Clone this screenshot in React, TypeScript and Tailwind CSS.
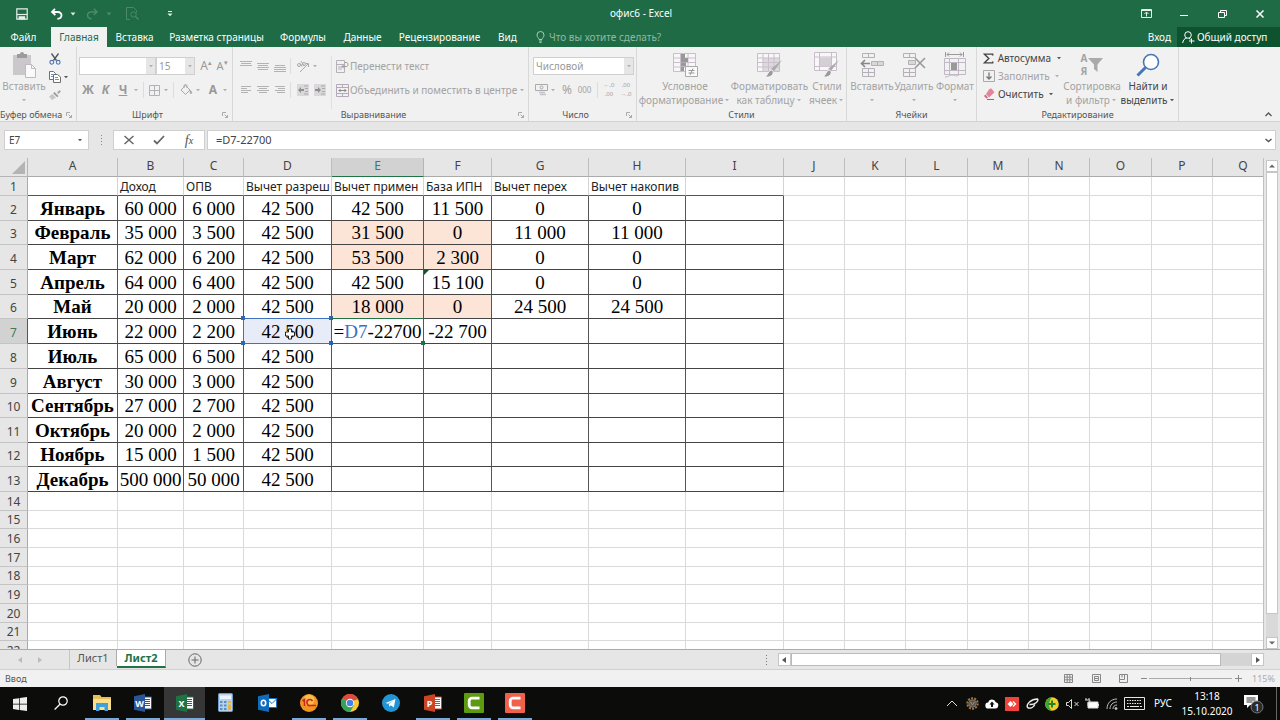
import { useState } from 'react';
import type { ReactNode } from 'react';
import clsx from 'clsx';

// DATA

const columns = [
  { name: 'A', width: 90 },
  { name: 'B', width: 66 },
  { name: 'C', width: 60 },
  { name: 'D', width: 88 },
  { name: 'E', width: 92 },
  { name: 'F', width: 68 },
  { name: 'G', width: 97 },
  { name: 'H', width: 97 },
  { name: 'I', width: 98 },
  { name: 'J', width: 61 },
  { name: 'K', width: 61 },
  { name: 'L', width: 62 },
  { name: 'M', width: 61 },
  { name: 'N', width: 61 },
  { name: 'O', width: 62 },
  { name: 'P', width: 61 },
  { name: 'Q', width: 61 },
];

const headers = ['', 'Доход', 'ОПВ', 'Вычет разреш', 'Вычет примен', 'База ИПН', 'Вычет перех', 'Вычет накопив', ''];

const months = [
  ['Январь', '60 000', '6 000', '42 500', '42 500', '11 500', '0', '0', ''],
  ['Февраль', '35 000', '3 500', '42 500', '31 500', '0', '11 000', '11 000', ''],
  ['Март', '62 000', '6 200', '42 500', '53 500', '2 300', '0', '0', ''],
  ['Апрель', '64 000', '6 400', '42 500', '42 500', '15 100', '0', '0', ''],
  ['Май', '20 000', '2 000', '42 500', '18 000', '0', '24 500', '24 500', ''],
  ['Июнь', '22 000', '2 200', '42 500', '=D7-22700', '-22 700', '', '', ''],
  ['Июль', '65 000', '6 500', '42 500', '', '', '', '', ''],
  ['Август', '30 000', '3 000', '42 500', '', '', '', '', ''],
  ['Сентябрь', '27 000', '2 700', '42 500', '', '', '', '', ''],
  ['Октябрь', '20 000', '2 000', '42 500', '', '', '', '', ''],
  ['Ноябрь', '15 000', '1 500', '42 500', '', '', '', '', ''],
  ['Декабрь', '500 000', '50 000', '42 500', '', '', '', '', ''],
];

const rowHeights = [19, 25, 24, 25, 25, 24, 25, 25, 25, 24, 25, 24, 25, 19, 18, 19, 19, 18, 19, 19, 18, 19];
const shaded = ['E3', 'F3', 'E4', 'F4', 'E6', 'F6'];

// SMALL PARTS

function Caret({ dark = false }: { dark?: boolean }) {
  return (
    <svg width="8" height="4" viewBox="0 0 8 4" className="shrink-0">
      <path d="M2 1h4L4 3.2z" fill={dark ? '#555' : '#b0b0b0'} />
    </svg>
  );
}

function Sep() {
  return <span className="h-4 w-px shrink-0 bg-[#dcdcdc]" />;
}

function Tool({ label, className, children }: { label: string; className?: string; children: ReactNode }) {
  return (
    <button aria-label={label} className={clsx('flex h-[18px] shrink-0 items-center justify-center', className)}>
      {children}
    </button>
  );
}

function Group({ label, launcher = false, className, children }: { label: string; launcher?: boolean; className: string; children: ReactNode }) {
  return (
    <section aria-label={label} className={clsx('flex shrink-0 flex-col', className)}>
      <div className="flex min-h-0 flex-1 border-r border-[#d8d8d8]">{children}</div>
      <div className="flex h-3 items-center border-r border-[#d8d8d8] text-[9px] leading-3 text-[#555]">
        <span className="flex-1 whitespace-nowrap text-center">{label}</span>
        {launcher && (
          <button aria-label={`${label}: параметры`} className="flex w-[14px] justify-center">
            <svg width="6" height="6" viewBox="0 0 6 6" fill="none" stroke="#aaa">
              <path d="M.5 4V.5H4M2.5 2.5l3 3M5.5 3v2.5H3" />
            </svg>
          </button>
        )}
      </div>
    </section>
  );
}

function BigButton({ icon, lines, className, dark = false, caretBelow = false }: { icon: ReactNode; lines: string[]; className: string; dark?: boolean; caretBelow?: boolean }) {
  return (
    <button className={clsx('flex shrink-0 flex-col items-center pt-1 text-[10px] leading-[14px] whitespace-nowrap', dark ? 'text-[#444]' : 'text-[#a3a3a3]', className)}>
      <span className="flex h-7 items-center">{icon}</span>
      <span>{lines[0]}</span>
      <span className="flex h-[14px] items-center">
        {!caretBelow && lines[1]}
        <Caret dark={dark} />
      </span>
    </button>
  );
}

function Combo({ label, value, className }: { label: string; value: string; className: string }) {
  return (
    <span className={clsx('flex h-[18px] shrink-0 border border-[#d0d0d0] bg-white', className)}>
      <select aria-label={label} defaultValue={value} className="min-w-0 flex-1 appearance-none bg-white pl-[2px] text-[10px] leading-4 text-[#999] outline-none">
        <option>{value}</option>
      </select>
      <span className="flex w-[9px] items-center justify-center bg-[#e6e6e6]">
        <Caret />
      </span>
    </span>
  );
}

function Lines({ rows, top = 2 }: { rows: number[][]; top?: number }) {
  return (
    <svg width="13" height="14" viewBox="0 0 13 14" stroke="#b3b3b3">
      {rows.map(([from, to], i) => (
        <path key={i} d={`M${from} ${top + i * 2 + 0.5}H${to}`} />
      ))}
    </svg>
  );
}

// TITLE BAR

function TitleBar() {
  return (
    <header className="flex h-[27px] items-center bg-[#1e6b46] text-white">
      <div className="flex flex-1 items-center pl-[15px]">
        <Tool label="Сохранить" className="w-[14px]">
          <svg width="12" height="12" viewBox="0 0 12 12" fill="none" stroke="#e6f0ea" strokeWidth="1.2">
            <path d="M.8.8h10.4v10.4H.8z" />
            <path d="M1 6.5h10" />
            <path d="M3.2 11V8.8h5.4V11z" fill="#e6f0ea" />
          </svg>
        </Tool>
        <Tool label="Отменить" className="ml-[21px] w-[14px]">
          <svg width="14" height="12" viewBox="0 0 14 12" fill="none" stroke="#fff" strokeWidth="1.8">
            <path d="M5 .8L2 4l3.4 3M2.4 4h5.4c5 0 5 6.5-.4 6.8" />
          </svg>
        </Tool>
        <svg width="8" height="4" viewBox="0 0 8 4" className="ml-[5px]"><path d="M1.5.5h5L4 3.5z" fill="#dfece5" /></svg>
        <Tool label="Вернуть" className="ml-2 w-[14px]">
          <svg width="14" height="12" viewBox="0 0 14 12" fill="none" stroke="#4b8a69" strokeWidth="1.6">
            <path d="M9 .8L12 4 8.6 7M11.6 4H6.2c-5 0-5 6.5.4 6.8" />
          </svg>
        </Tool>
        <svg width="8" height="4" viewBox="0 0 8 4" className="ml-[6px]"><path d="M1.5.5h5L4 3.5z" fill="#4b8a69" /></svg>
        <Tool label="Просмотр" className="ml-3 w-[14px]">
          <svg width="13" height="13" viewBox="0 0 13 13" fill="none" stroke="#4b8a69">
            <path d="M4 12.500H.5V.5h7l3 3v2" />
            <circle cx="7.500" cy="7.500" r="2.700" />
            <path d="M9.500 9.500l3 3" strokeWidth="1.400" />
          </svg>
        </Tool>
        <Tool label="Настройка панели" className="ml-[26px] w-[10px]">
          <svg width="6" height="6" viewBox="0 0 6 6"><path d="M1 0h4v1H1zM.5 2.500h5L3 5.200z" fill="#dfece5" /></svg>
        </Tool>
      </div>
      <h1 className="text-[10px]">офис6 - Excel</h1>
      <div className="flex flex-1 items-center justify-end pr-[13px]">
        <Tool label="Параметры ленты" className="w-[14px]">
          <svg width="11" height="9" viewBox="0 0 11 9" fill="none" stroke="#e6f0ea">
            <path d="M.5.500h10v8H.5zM.5 1.500h10M5.500 7.500V3.500M3.500 5l2-2 2 2" />
          </svg>
        </Tool>
        <Tool label="Свернуть" className="ml-6 w-[14px]">
          <span className="mt-[3px] h-px w-2 bg-white" />
        </Tool>
        <Tool label="Восстановить" className="ml-6 w-[14px]">
          <svg width="9" height="8" viewBox="0 0 9 8" fill="none" stroke="#fff">
            <path d="M.5 2.500h6v5h-6zM2.500 2.500v-2h6v5h-2" />
          </svg>
        </Tool>
        <Tool label="Закрыть" className="ml-6 w-[14px]">
          <svg width="8" height="8" viewBox="0 0 8 8" stroke="#fff" strokeWidth="1.500"><path d="M.5.500l7 7M7.500.500l-7 7" /></svg>
        </Tool>
      </div>
    </header>
  );
}

const tabs = [
  { name: 'Вставка', width: 'w-[55px]' },
  { name: 'Разметка страницы', width: 'w-[109px]' },
  { name: 'Формулы', width: 'w-[64px]' },
  { name: 'Данные', width: 'w-[55px]' },
  { name: 'Рецензирование', width: 'w-[99px]' },
  { name: 'Вид', width: 'w-[37px]' },
];

function TabBar() {
  return (
    <nav className="flex h-5 bg-[#1e6b46] text-[10px] text-white">
      <button className="w-[51px] pr-1">Файл</button>
      <button className="w-[56px] bg-[#f1f1f1] text-[#1e6b46]">Главная</button>
      {tabs.map(tab => (
        <button key={tab.name} className={clsx('whitespace-nowrap', tab.width)}>{tab.name}</button>
      ))}
      <label className="ml-[10px] flex items-center gap-1">
        <svg width="9" height="12" viewBox="0 0 9 12" fill="none" stroke="#a9cbb9">
          <path d="M3 8.500C3 7 1 6.200 1 4a3.500 3.500 0 0 1 7 0c0 2.200-2 3-2 4.500zM3 10h3M3.500 11.500h2" />
        </svg>
        <input aria-label="Помощник" placeholder="Что вы хотите сделать?" className="w-[140px] bg-transparent outline-none placeholder:text-[#8fb9a3]" />
      </label>
      <button className="mr-[6px] ml-auto whitespace-nowrap">Вход</button>
      <button className="flex w-[103px] items-center gap-[2px] bg-[#0d5330] pl-[5px] whitespace-nowrap">
        <svg width="13" height="13" viewBox="0 0 13 13" fill="none" stroke="#fff">
          <circle cx="6" cy="4" r="3.300" />
          <path d="M.7 12c.4-3 1.800-4.500 4-5M7 7.300l1.500 1M9.500 7.500v5M7 10h5.500" />
        </svg>
        Общий доступ
      </button>
    </nav>
  );
}

// RIBBON

function Ribbon() {
  return (
    <div className="flex h-[74px] overflow-hidden bg-[#f1f1f1]">
      <Group label="Буфер обмена" launcher className="w-[77px]">
        <BigButton
          className="w-12"
          lines={['Вставить']}
          caretBelow
          icon={
            <svg width="24" height="26" viewBox="0 0 24 26">
              <path d="M1 3h18v20H1z" fill="#cbc8cc" />
              <path d="M5 2h3a2 2 0 0 1 4 0h3v4H5z" fill="#9b9b9b" />
              <path d="M13.500 12.500h6l4 4v9h-10z" fill="#fafafa" stroke="#bdb8c2" />
              <path d="M19.500 12.500v4h4" fill="none" stroke="#bdb8c2" />
            </svg>
          }
        />
        <div className="flex flex-col pt-[3px]">
          <Tool label="Вырезать" className="w-[14px]">
            <svg width="12" height="12" viewBox="0 0 12 12" fill="none">
              <path d="M2.500.5l5 7M9.500.5l-5 7" stroke="#555" strokeWidth="1.300" />
              <circle cx="2.800" cy="9.300" r="1.900" stroke="#4a78b0" strokeWidth="1.100" />
              <circle cx="9.200" cy="9.300" r="1.900" stroke="#4a78b0" strokeWidth="1.100" />
            </svg>
          </Tool>
          <div className="flex items-center">
            <Tool label="Копировать" className="w-[14px]">
              <svg width="12" height="12" viewBox="0 0 12 12" fill="#fff" stroke="#707070">
                <path d="M.5.500h4l2 2v6h-6z" />
                <path d="M4.500 3.500h4l3 2.500v5.500h-7z" />
                <path d="M2 3.500h2M2 5.500h2M6 6.500h3M6 8.500h4" stroke="#6f92bb" />
              </svg>
            </Tool>
            <Caret dark />
          </div>
          <Tool label="Формат по образцу" className="w-[14px]">
            <svg width="12" height="10" viewBox="0 0 12 10">
              <path d="M8 2.500L10.500 0 12 1.500 9.500 4z" fill="#aaa" />
              <path d="M5.500 2l4 4-1.300 1.300-4-4z" fill="#999" />
              <path d="M3.500 4L7 7.500 3 10 0 6.500z" fill="#c9c4cc" />
            </svg>
          </Tool>
        </div>
      </Group>

      <Group label="Шрифт" launcher className="w-[156px]">
        <div className="flex flex-col gap-[5px] pt-[9px] pl-[2px] text-[#999]">
          <div className="flex h-5 items-center">
            <Combo label="Имя шрифта" value="" className="w-[77px]" />
            <Combo label="Размер шрифта" value="15" className="w-[39px]" />
            <Tool label="Увеличить размер" className="ml-[3px] w-4 text-[12px]">A<sup className="text-[7px]">▴</sup></Tool>
            <Tool label="Уменьшить размер" className="w-4 text-[11px]">A<sup className="text-[7px]">▾</sup></Tool>
          </div>
          <div className="flex h-[18px] items-center text-[12px] font-bold">
            <Tool label="Полужирный" className="w-[18px]">Ж</Tool>
            <Tool label="Курсив" className="w-[17px] italic">К</Tool>
            <Tool label="Подчеркнутый" className="w-[18px] underline">Ч</Tool>
            <Caret />
            <span className="w-[3px]" />
            <Sep />
            <Tool label="Границы" className="ml-[2px] w-4">
              <svg width="11" height="11" viewBox="0 0 11 11" fill="none" stroke="#b5b0b8"><path d="M.5.500h10v10H.5zM5.500.500v10M.5 5.500h10" /></svg>
            </Tool>
            <Caret />
            <span className="w-[3px]" />
            <Sep />
            <Tool label="Цвет заливки" className="ml-[4px] w-4">
              <svg width="13" height="12" viewBox="0 0 13 12" fill="none" stroke="#a8a8a8">
                <path d="M5.500 1.500L1 6l4.500 4.500L10 6zM4 4V2a1.500 1.500 0 0 1 3 0v2" />
                <path d="M10.500 6.500c1.500 2 1.500 3 .5 3s-1-1-.5-3z" fill="#a8a8a8" />
              </svg>
            </Tool>
            <Caret />
            <Tool label="Цвет текста" className="ml-[3px] w-4">A</Tool>
            <Caret />
          </div>
        </div>
      </Group>

      <Group label="Выравнивание" launcher className="w-[296px]">
        <div className="flex flex-col gap-[5px] pt-[9px] pl-1">
          <div className="flex h-5 items-center">
            <Tool label="По верхнему краю" className="w-[17px]"><Lines top={2} rows={[[1, 13], [2, 12], [1, 13]]} /></Tool>
            <Tool label="По середине" className="w-[17px]"><Lines top={4} rows={[[1, 13], [2, 12], [1, 13], [2, 12]]} /></Tool>
            <Tool label="По нижнему краю" className="w-[17px]"><Lines top={6} rows={[[2, 12], [1, 13], [1, 13], [1, 13]]} /></Tool>
            <span className="w-[2px]" />
            <Sep />
            <Tool label="Ориентация" className="ml-1 w-4">
              <svg width="14" height="13" viewBox="0 0 14 13" fill="none" stroke="#aaa">
                <circle cx="3" cy="5" r="1.500" />
                <path d="M4.500 3.500l1.500 3M5 1l3 5" />
                <circle cx="8" cy="4" r="1.500" />
                <path d="M4 12l8-8M9 3.500h3.500V7" />
              </svg>
            </Tool>
            <Caret />
          </div>
          <div className="flex h-[18px] items-center">
            <Tool label="По левому краю" className="w-[17px]"><Lines top={3} rows={[[2, 12], [2, 8], [2, 12], [2, 9]]} /></Tool>
            <Tool label="По центру" className="w-[17px]"><Lines top={3} rows={[[1, 13], [3, 11], [1, 13], [3, 11]]} /></Tool>
            <Tool label="По правому краю" className="w-[17px]"><Lines top={3} rows={[[2, 12], [5, 12], [2, 12], [4, 12]]} /></Tool>
            <span className="w-[2px]" />
            <Sep />
            <Tool label="Уменьшить отступ" className="ml-[3px] w-[17px]">
              <svg width="12" height="12" viewBox="0 0 12 12"><path d="M0 0h12v12H0z" fill="#dad8db" /><path d="M1 6l3-3v2h3v2H4v2z" fill="#8f8f8f" /><path d="M7 2h4M8 4.500h3M8 7.500h3M7 10h4" stroke="#aaa" /></svg>
            </Tool>
            <Tool label="Увеличить отступ" className="w-[17px]">
              <svg width="12" height="12" viewBox="0 0 12 12"><path d="M0 0h12v12H0z" fill="#dad8db" /><path d="M7 6L4 3v2H1v2h3v2z" fill="#8f8f8f" /><path d="M7 2h4M8 4.500h3M8 7.500h3M7 10h4" stroke="#aaa" /></svg>
            </Tool>
          </div>
        </div>
        <div className="mt-[9px] ml-[3px] flex flex-1 flex-col items-start gap-[5px] border-l border-[#e0e0e0] pl-1 text-[10px] text-[#a3a3a3]">
          <button className="flex h-5 items-center gap-px whitespace-nowrap">
            <svg width="13" height="13" viewBox="0 0 13 13" fill="none" stroke="#b5b0b8">
              <path d="M.5.500h8v12h-8zM.5 4.500h8" />
              <path d="M2 7h4M2 9h4" />
              <path d="M6 6.500h4.500c2 0 2-4 0-4H9M8 4.500l-2 2 2 2" stroke="#999" />
            </svg>
            Перенести текст
          </button>
          <button className="flex h-[18px] items-center gap-px whitespace-nowrap">
            <svg width="13" height="13" viewBox="0 0 13 13" fill="none" stroke="#b5a8b8">
              <path d="M.5.500h12v12H.5zM.5 3.500h12M.5 9.500h12M6.500.500v3M6.500 9.500v3" />
              <path d="M3 6.500h7M4.500 5L3 6.500 4.500 8M8.500 5L10 6.500 8.500 8" stroke="#888" />
            </svg>
            Объединить и поместить в центре
            <Caret />
          </button>
        </div>
      </Group>

      <Group label="Число" launcher className="w-[108px]">
        <div className="flex flex-col gap-[5px] pt-[9px] pl-1 text-[#a3a3a3]">
          <div className="flex h-5 items-center">
            <Combo label="Числовой формат" value="Числовой" className="w-[101px]" />
          </div>
          <div className="flex h-[18px] items-center">
            <Tool label="Финансовый формат" className="w-4">
              <svg width="13" height="12" viewBox="0 0 13 12" fill="none" stroke="#aaa">
                <path d="M.5.500h12v6H.5z" /><circle cx="6.500" cy="3.500" r="1.500" />
                <path d="M4 8.500h6M5 10.500h6" stroke="#c8c0ca" strokeWidth="1.500" />
              </svg>
            </Tool>
            <Caret />
            <Tool label="Процентный формат" className="ml-[1px] w-[18px] text-[12px]">%</Tool>
            <Tool label="Формат с разделителями" className="w-[17px] text-[8px]">000</Tool>
            <span className="w-1" />
            <Sep />
            <Tool label="Увеличить разрядность" className="ml-[3px] w-4 flex-col text-[6px] leading-[9px]">
              <span>←,0</span><span>,00</span>
            </Tool>
            <Tool label="Уменьшить разрядность" className="w-[18px] flex-col text-[6px] leading-[9px]">
              <span>,00</span><span>→,0</span>
            </Tool>
          </div>
        </div>
      </Group>

      <Group label="Стили" className="w-[210px]">
        <BigButton
          className="w-[96px]"
          lines={['Условное', 'форматирование']}
          icon={
            <svg width="25" height="24" viewBox="0 0 25 24" fill="none" stroke="#c9bfcb">
              <path d="M.5.500h22v18H.5z" fill="#f8f6f8" />
              <path d="M.5 5h22M.5 9.500h22M.5 14h22M7.500.500v18M15 .5v18" />
              <path d="M8 1h4v4H8zM8 5h7v4H8zM8 9.500h5v4H8zM8 14h3v4H8z" fill="#999" stroke="none" />
              <path d="M12.500 13.500h12v10h-12z" fill="#fafafa" stroke="#aaa" />
              <path d="M15.500 17.500h6M15.500 20h6M20 15.500l-3 6.500" stroke="#999" />
            </svg>
          }
        />
        <BigButton
          className="w-[73px]"
          lines={['Форматировать', 'как таблицу']}
          icon={
            <svg width="26" height="25" viewBox="0 0 26 25" fill="none" stroke="#c9bfcb">
              <path d="M.5.500h22v18H.5z" fill="#f8f6f8" />
              <path d="M6 5h16v13H6z" fill="#dcdadd" stroke="none" />
              <path d="M.5 5h22M.5 9.500h22M.5 14h22M6 .5v18M11.500.500v18M17 .5v18" />
              <path d="M25 7l-8 11-3-2z" fill="#aaa" stroke="none" />
              <path d="M14 17c3 0 3 5-1 6.500-2 .8-4 .5-5 0 3-1 3-5.500 6-6.500z" fill="#999" stroke="#f1f1f1" />
            </svg>
          }
        />
        <BigButton
          className="ml-[1px] w-10"
          lines={['Стили', 'ячеек']}
          icon={
            <svg width="26" height="26" viewBox="0 0 26 26" fill="none" stroke="#c9bfcb">
              <path d="M.5.500h22v18H.5z" fill="#f8f6f8" />
              <path d="M.5 5h22M.5 14.500h22M5.500.500v18M17.500.500v18" />
              <path d="M6 5.500h11v9H6z" fill="#d3cfd5" stroke="none" />
              <path d="M25 8l-8 11-3-2z" fill="#aaa" stroke="none" />
              <path d="M15 18c3 0 3 5-1 6.500-2 .8-4 .5-5 0 3-1 3-5.500 6-6.500z" fill="#999" stroke="#f1f1f1" />
            </svg>
          }
        />
      </Group>

      <Group label="Ячейки" className="w-[130px]">
        <BigButton
          className="ml-1 w-[42px]"
          lines={['Вставить']}
          caretBelow
          icon={
            <svg width="24" height="24" viewBox="0 0 24 24" fill="none" stroke="#b5b0b8">
              <path d="M2.500.500h12v4h-12zM8.500.500v4M2.500 15.500h12v8h-12zM8.500 15.500v8M2.500 19.500h12" />
              <path d="M11.500 8.500h12v4h-12zM17.500 8.500v4" fill="#d8d8d8" />
              <path d="M10 10.500H2M5 7l-3.500 3.500L5 14" stroke="#888" strokeWidth="1.600" />
            </svg>
          }
        />
        <BigButton
          className="w-[42px]"
          lines={['Удалить']}
          caretBelow
          icon={
            <svg width="24" height="24" viewBox="0 0 24 24" fill="none" stroke="#b5b0b8">
              <path d="M1.500.500h12v4h-12zM7.500.500v4M1.500 15.500h12v8h-12zM7.500 15.500v8M1.500 19.500h12" />
              <path d="M6.500 7.500h7v4h-7z" fill="#d8d8d8" />
              <path d="M13 5l10 10M23 5L13 15" stroke="#999" strokeWidth="1.600" />
            </svg>
          }
        />
        <BigButton
          className="w-[40px]"
          lines={['Формат']}
          caretBelow
          icon={
            <svg width="24" height="26" viewBox="0 0 24 26" fill="none" stroke="#c0b8c2">
              <path d="M2.500 0v5M20.500 0v5M4 2.500h15M6 .5l-2 2 2 2M17 .5l2 2-2 2" stroke="#999" />
              <path d="M1.500 6.500h21v16h-21zM1.500 10.500h21M1.500 18.500h21M6.500 6.500v16M15.500 6.500v16" />
              <path d="M8 11h6v7H8z" fill="#999" stroke="none" />
              <path d="M2 25c4 0 4-2 7-2s3 2 7 0" />
            </svg>
          }
        />
      </Group>

      <Group label="Редактирование" className="w-[202px]">
        <div className="flex w-[86px] flex-col pt-[2px] pl-[6px] text-[10px] whitespace-nowrap text-[#444]">
          <button className="flex h-[18px] items-center gap-1">
            <svg width="11" height="11" viewBox="0 0 11 11" fill="none" stroke="#444" strokeWidth="1.500"><path d="M10 2.500V1H1.500L6 5.500 1.500 10H10V8.500" /></svg>
            Автосумма
            <Caret dark />
          </button>
          <button className="flex h-[18px] items-center gap-[3px] text-[#a3a3a3]">
            <svg width="12" height="12" viewBox="0 0 12 12" fill="none" stroke="#aaa"><path d="M.5.500h11v11H.5z" /><path d="M6 2.500v6M3.500 6.500L6 9l2.500-2.500" stroke="#777" strokeWidth="1.300" /></svg>
            Заполнить
            <Caret />
          </button>
          <button className="flex h-[18px] items-center gap-[3px]">
            <svg width="12" height="12" viewBox="0 0 12 12"><path d="M6 1.500L8 .2l3.500 4L6 9.500 3 6z" fill="#e5839a" /><path d="M2.500 6.500L5 9.700 3.500 10.500 1 8z" fill="#d9607c" /><path d="M4 11.500h7" stroke="#777" /></svg>
            Очистить
            <Caret dark />
          </button>
        </div>
        <BigButton
          className="w-[58px]"
          lines={['Сортировка', 'и фильтр']}
          icon={
            <span className="flex items-center">
              <span className="flex flex-col text-[10px] leading-[13px] font-bold"><span>А</span><span>Я</span></span>
              <svg width="15" height="16" viewBox="0 0 15 16" className="ml-px"><path d="M0 1h15L9.500 7.500V15L6 12V7.500z" fill="#aaa" /></svg>
            </span>
          }
        />
        <BigButton
          className="w-[54px]"
          dark
          lines={['Найти и', 'выделить']}
          icon={
            <svg width="24" height="24" viewBox="0 0 24 24" fill="#fff" stroke="#4577b8">
              <circle cx="15" cy="9" r="7.500" strokeWidth="1.600" />
              <path d="M9.500 14.500L1.500 22.500" strokeWidth="3" />
            </svg>
          }
        />
      </Group>
      <button aria-label="Свернуть ленту" className="mt-auto mr-2 mb-1 ml-auto">
        <svg width="7" height="5" viewBox="0 0 7 5" fill="none" stroke="#555" strokeWidth="1.300"><path d="M.5 4l3-3 3 3" /></svg>
      </button>
    </div>
  );
}

// FORMULA BAR

function FormulaBar({ formula, onChange }: { formula: string; onChange: (value: string) => void }) {
  return (
    <div className="flex h-[37px] border-t border-[#d2d2d2] bg-[#e6e6e6] pt-2 pr-1 pl-1 text-[10px] text-[#444]">
      <div className="flex h-5 w-[85px] items-center border border-[#cfcfcf] bg-white pr-1">
        <input aria-label="Имя ячейки" defaultValue="E7" className="w-0 flex-1 pl-1 outline-none" />
        <button aria-label="Список имен"><Caret dark /></button>
      </div>
      <div className="flex h-5 w-6 flex-col items-center justify-center gap-[2px]">
        <span className="size-px bg-[#888]" />
        <span className="size-px bg-[#888]" />
        <span className="size-px bg-[#888]" />
        <span className="size-px bg-[#888]" />
      </div>
      <div className="flex h-5 w-[92px] items-center border border-[#cfcfcf] bg-white">
        <Tool label="Отмена" className="flex-1">
          <svg width="10" height="10" viewBox="0 0 10 10" stroke="#666" strokeWidth="1.500"><path d="M.5 1l9 8M9.500 1l-9 8" /></svg>
        </Tool>
        <Tool label="Ввод" className="flex-1">
          <svg width="12" height="10" viewBox="0 0 12 10" fill="none" stroke="#666" strokeWidth="1.800"><path d="M1 5.500L4 8.500 11 1" /></svg>
        </Tool>
        <Tool label="Вставить функцию" className="flex-1 font-['Liberation_Serif',serif] text-[14px] italic">
          <span className="text-[#555]">f</span><span className="text-[10px]">x</span>
        </Tool>
      </div>
      <div className="ml-[2px] flex h-5 flex-1 items-center border border-[#cfcfcf] bg-white pr-[3px]">
        <input aria-label="Строка формул" value={formula} onChange={e => onChange(e.target.value)} className="min-w-0 flex-1 pl-2 text-[11px] outline-none" />
        <button aria-label="Развернуть строку формул">
          <svg width="7" height="5" viewBox="0 0 7 5" fill="none" stroke="#555" strokeWidth="1.500"><path d="M.5 1l3 2.500 3-2.500" /></svg>
        </button>
      </div>
    </div>
  );
}

// SHEET

function Handles({ color }: { color: string }) {
  return (
    <>
      <span className={clsx('absolute -top-[3px] -left-[3px] size-1', color)} />
      <span className={clsx('absolute -top-[3px] -right-[2px] size-1', color)} />
      <span className={clsx('absolute -bottom-[2px] -left-[3px] size-1', color)} />
      <span className={clsx('absolute -right-[2px] -bottom-[2px] size-1', color)} />
    </>
  );
}

function CellContent({ id, text, formula }: { id: string; text: string; formula: string }) {
  if (id === 'D7') {
    return (
      <>
        {text}
        <span className="absolute -top-px -right-px -bottom-px -left-px border border-[#3f73c0]" />
        <Handles color="bg-[#2f66b5]" />
        <svg width="10" height="12" viewBox="0 0 10 12" className="absolute top-[9px] left-[41px]">
          <path d="M3.500 1h3v3h3v4h-3v3h-3V8h-3V4h3z" fill="#fff" stroke="#222" />
        </svg>
      </>
    );
  }
  if (id === 'E7') {
    const match = formula.match(/^(=)(D7)(.*)$/);
    return (
      <>
        {match ? <>{match[1]}<span className="text-[#3a6fc4]">{match[2]}</span>{match[3]}</> : formula}
        <span className="absolute -top-px -right-px -bottom-px -left-px border border-[#217346]" />
        <span className="absolute -right-[2px] -bottom-[2px] size-1 bg-[#217346]" />
      </>
    );
  }
  return (
    <>
      {text}
      {id === 'F5' && (
        <svg width="5" height="5" viewBox="0 0 5 5" className="absolute top-0 left-0"><path d="M0 0h5L0 5z" fill="#14532d" /></svg>
      )}
    </>
  );
}

function Sheet({ formula }: { formula: string }) {
  return (
    <div className="flex min-h-0 flex-1 bg-[#e6e6e6]">
      <div className="min-w-0 flex-1 overflow-hidden border-r border-[#c0c0c0]">
        <table className="w-[1274px] table-fixed border-separate border-spacing-0 bg-white">
          <colgroup>
            <col className="w-[28px]" />
            {columns.map(col => <col key={col.name} style={{ width: col.width }} />)}
          </colgroup>
          <thead>
            <tr className="h-[19px] text-[12px] leading-4 text-[#444]">
              <th className="border-r border-b border-[#b5b5b5] bg-[#e6e6e6] p-0">
                <svg width="13" height="13" viewBox="0 0 13 13" className="ml-3"><path d="M13 0v13H0z" fill="#b4b4b4" /></svg>
              </th>
              {columns.map(col => (
                <th
                  key={col.name}
                  scope="col"
                  className={clsx(
                    'border-r border-b p-0 pb-[2px] font-normal',
                    col.name === 'E' ? 'border-r-[#b5b5b5] border-b-[#217346] bg-[#d2d2d2] text-[#3f7a5a]' : 'border-r-[#bdbdbd] border-b-[#ababab] bg-[#e6e6e6]'
                  )}
                >
                  {col.name}
                </th>
              ))}
            </tr>
          </thead>
          <tbody>
            {rowHeights.map((height, i) => {
              const row = i + 1;
              const isMonth = row > 1 && row < 14;
              return (
                <tr key={row} style={{ height }}>
                  <th
                    scope="row"
                    className={clsx(
                      'border-r border-b p-0 align-bottom text-[12px] leading-[17px] font-normal',
                      isMonth && 'pb-[2px]',
                      row === 7 ? 'border-r-[#217346] border-b-[#c4c4c4] bg-[#d2d2d2] text-[#3f7a5a]' : 'border-r-[#ababab] border-b-[#c4c4c4] bg-[#e6e6e6] text-[#444]'
                    )}
                  >
                    {row}
                  </th>
                  {columns.map((col, c) => {
                    const id = col.name + row;
                    const inTable = c < 9;
                    const text = !inTable ? '' : row === 1 ? headers[c] : isMonth ? months[row - 2][c] : '';
                    return (
                      <td
                        key={id}
                        className={clsx(
                          'relative border-r border-b p-0 whitespace-nowrap',
                          isMonth && inTable ? 'border-r-[#555] border-b-[#444]' : row === 1 && inTable ? 'border-r-[#d4d4d4] border-b-[#555]' : 'border-[#dadada]',
                          isMonth && "pt-px text-center font-['Liberation_Serif',serif] text-[19px] leading-[22px] text-black",
                          isMonth && c === 0 && 'font-bold',
                          row === 1 && 'pl-[2px] text-[12px] leading-[17px] text-[#222]',
                          shaded.includes(id) && 'bg-[#fce4d6]',
                          id === 'D7' && 'bg-[#e8ecf8]'
                        )}
                      >
                        <CellContent id={id} text={text} formula={formula} />
                      </td>
                    );
                  })}
                </tr>
              );
            })}
          </tbody>
        </table>
      </div>
      <div className="mx-[2px] mt-[2px] flex w-3 flex-col">
        <button aria-label="Прокрутить вверх" className="flex h-3 items-center justify-center border border-[#c6c6c6] bg-white">
          <svg width="6" height="4" viewBox="0 0 6 4"><path d="M0 3.500h6L3 .5z" fill="#666" /></svg>
        </button>
        <div className="flex-1 bg-[#d9d9d9]">
          <div className="h-[95%] border border-[#c6c6c6] bg-white" />
        </div>
        <button aria-label="Прокрутить вниз" className="flex h-3 items-center justify-center border border-[#c6c6c6] bg-white">
          <svg width="6" height="4" viewBox="0 0 6 4"><path d="M0 .5h6L3 3.500z" fill="#666" /></svg>
        </button>
      </div>
    </div>
  );
}

function SheetTabs() {
  return (
    <div className="flex h-5 border-t border-[#ababab] bg-[#e6e6e6] text-[11px] leading-4 text-[#555]">
      <div className="flex w-[70px] items-center border-r border-[#c6c6c6] pl-[18px]">
        <button aria-label="Предыдущий лист"><svg width="4" height="6" viewBox="0 0 4 6"><path d="M4 0v6L0 3z" fill="#bbb" /></svg></button>
        <button aria-label="Следующий лист" className="ml-4"><svg width="4" height="6" viewBox="0 0 4 6"><path d="M0 0v6l4-3z" fill="#bbb" /></svg></button>
      </div>
      <button className="h-4 w-[47px] border-r border-[#ababab]">Лист1</button>
      <button className="h-[18px] w-[49px] border-r border-b-2 border-r-[#ababab] border-b-[#217346] bg-white font-bold text-[#217346]">Лист2</button>
      <button aria-label="Новый лист" className="ml-[22px]">
        <svg width="14" height="14" viewBox="0 0 14 14" fill="none" stroke="#666"><circle cx="7" cy="7" r="6.200" /><path d="M7 3.500v7M3.500 7h7" /></svg>
      </button>
      <div className="ml-auto flex h-full w-[22px] flex-col items-center justify-center gap-[2px]">
        <span className="size-px bg-[#777]" />
        <span className="size-px bg-[#777]" />
        <span className="size-px bg-[#777]" />
        <span className="size-px bg-[#777]" />
      </div>
      <div className="mt-[3px] mr-4 flex h-[13px] w-[38%] bg-[#d4d4d4]">
        <button aria-label="Прокрутить влево" className="flex w-[13px] items-center justify-center border border-[#c6c6c6] bg-white">
          <svg width="4" height="6" viewBox="0 0 4 6"><path d="M4 0v6L0 3z" fill="#555" /></svg>
        </button>
        <div className="w-[430px] border border-[#bbb] bg-white" />
        <button aria-label="Прокрутить вправо" className="ml-auto flex w-[13px] items-center justify-center border border-[#c6c6c6] bg-white">
          <svg width="4" height="6" viewBox="0 0 4 6"><path d="M0 0v6l4-3z" fill="#555" /></svg>
        </button>
      </div>
    </div>
  );
}

function StatusBar() {
  return (
    <footer className="flex h-[18px] items-center border-t border-[#d0d0d0] bg-[#f1f1f1] px-[5px] text-[9px] text-[#555]">
      <span>Ввод</span>
      <div className="ml-auto flex items-center text-[#777]">
        <Tool label="Обычный" className="w-[27px]">
          <svg width="9" height="9" viewBox="0 0 9 9" fill="none" stroke="#888"><path d="M.5.500h8v8h-8zM.5 3.200h8M.5 5.800h8M3.200.5v8M5.800.5v8" /></svg>
        </Tool>
        <Tool label="Разметка страницы" className="w-[28px]">
          <svg width="9" height="9" viewBox="0 0 9 9" fill="none" stroke="#888"><path d="M.5.500h8v8h-8zM2.500 2.500h4v4h-4zM3 4.500h3" /></svg>
        </Tool>
        <Tool label="Страничный режим" className="w-[27px]">
          <svg width="9" height="9" viewBox="0 0 9 9" fill="none" stroke="#888"><path d="M.5.500h8v8h-8zM.5 5.500h5v-5M3 .5v3" /></svg>
        </Tool>
        <button aria-label="Уменьшить" className="ml-[2px] flex w-[10px] justify-center"><span className="h-px w-[6px] bg-[#888]" /></button>
        <input
          type="range"
          aria-label="Масштаб"
          defaultValue={50}
          className="h-px w-[83px] appearance-none bg-[#aaa] [&::-webkit-slider-thumb]:h-1 [&::-webkit-slider-thumb]:w-px [&::-webkit-slider-thumb]:appearance-none [&::-webkit-slider-thumb]:bg-[#888]"
        />
        <button aria-label="Увеличить" className="ml-[3px]"><svg width="7" height="7" viewBox="0 0 7 7" stroke="#888"><path d="M0 3.500h7M3.500 0v7" /></svg></button>
        <span className="w-[33px] text-right text-[#aaa]">115%</span>
      </div>
    </footer>
  );
}

// TASKBAR

function OfficeIcon({ letter, color }: { letter: string; color: string }) {
  return (
    <svg width="18" height="18" viewBox="0 0 18 18">
      <path d="M8 3h9.500v12H8z" fill="#fff" stroke={color} />
      <path d="M11 5.500h5M11 7.500h5M11 9.500h5M11 11.500h5" stroke={color} />
      <path d="M0 2.200L11 0v18L0 15.800z" fill={color} />
      <text x="5.500" y="12.500" textAnchor="middle" fontSize="9" fontWeight="700" fill="#fff">{letter}</text>
    </svg>
  );
}

function CamtasiaIcon({ color }: { color: string }) {
  return (
    <svg width="20" height="20" viewBox="0 0 20 20">
      <rect width="20" height="20" rx="1" fill={color} />
      <path d="M15.500 5.200H8a2.800 2.800 0 0 0-2.800 2.800v4A2.800 2.800 0 0 0 8 14.800h7.500" fill="none" stroke="#fff" strokeWidth="2.800" />
    </svg>
  );
}

const apps = [
  {
    name: 'Поиск', running: false,
    icon: <svg width="14" height="14" viewBox="0 0 14 14" fill="none" stroke="#fff" strokeWidth="1.200"><circle cx="9" cy="5" r="4.200" /><path d="M6 8.200L.6 13.500" /></svg>,
  },
  {
    name: 'Проводник', running: true,
    icon: (
      <svg width="20" height="17" viewBox="0 0 20 17">
        <path d="M1 1h7l1.500 2H19v13H1z" fill="#e8bd5a" />
        <path d="M1 5h18v11H1z" fill="#fadf8f" />
        <path d="M4 9h12v8h-3.500v-4h-5v4H4z" fill="#3fa0dc" />
      </svg>
    ),
  },
  { name: 'Word', running: true, icon: <OfficeIcon letter="W" color="#2a5699" /> },
  { name: 'Excel', running: true, icon: <OfficeIcon letter="X" color="#207245" /> },
  {
    name: 'Калькулятор', running: false,
    icon: (
      <svg width="15" height="19" viewBox="0 0 15 19">
        <rect x=".5" y=".5" width="14" height="18" rx="1" fill="#b9d2ea" stroke="#6f9cc7" />
        <path d="M2 2.500h11v3.500H2z" fill="#eef6fd" />
        <path d="M2 8h2.500v2H2zM6 8h2.500v2H6zM2 11.500h2.500v2H2zM6 11.500h2.500v2H6zM2 15h2.500v2H2zM6 15h2.500v2H6z" fill="#5a8fc4" />
        <path d="M10 8h3v2h-3zM10 11.500h3V17h-3z" fill="#e5b44a" />
      </svg>
    ),
  },
  {
    name: 'Outlook', running: false,
    icon: (
      <svg width="19" height="18" viewBox="0 0 19 18">
        <path d="M9 4.500h9.500v9H9z" fill="#fff" stroke="#1b6fc0" />
        <path d="M10 6l4 3.500L18.500 5" fill="none" stroke="#1b6fc0" />
        <path d="M0 2.200L11 0v18L0 15.800z" fill="#0f6cbd" />
        <ellipse cx="5.500" cy="9" rx="2.200" ry="2.800" fill="none" stroke="#fff" strokeWidth="1.600" />
      </svg>
    ),
  },
  {
    name: '1С', running: true,
    icon: (
      <svg width="18" height="18" viewBox="0 0 18 18">
        <circle cx="9" cy="9" r="9" fill="#f29422" />
        <circle cx="9" cy="6" r="5.500" fill="#f9bd4c" />
        <path d="M2.500 7L4.500 5.500V12M12.500 7a3 3 0 1 0-2 4.500H16" fill="none" stroke="#c8281e" strokeWidth="1.600" />
      </svg>
    ),
  },
  {
    name: 'Chrome', running: true,
    icon: (
      <svg width="18" height="18" viewBox="0 0 18 18">
        <circle cx="9" cy="9" r="9" fill="#f7c93b" />
        <path d="M9 9L1.200 4.500a9 9 0 0 1 15.600 0z" fill="#dd4b3e" />
        <path d="M9 9L1.200 4.500A9 9 0 0 0 9 18l4-6.800z" fill="#34a257" />
        <path d="M9 4.500h7.800l.3 1H9z" fill="#dd4b3e" />
        <circle cx="9" cy="9" r="4.200" fill="#fff" />
        <circle cx="9" cy="9" r="3.300" fill="#4482ee" />
      </svg>
    ),
  },
  {
    name: 'Telegram', running: false,
    icon: (
      <svg width="18" height="18" viewBox="0 0 18 18">
        <circle cx="9" cy="9" r="9" fill="#2394d4" />
        <path d="M3.500 9l10-4-1.700 8.500-3-2.200-1.500 1.500-.5-2.800 4.700-3.500-5.500 3.200z" fill="#fff" />
      </svg>
    ),
  },
  {
    name: 'PowerPoint', running: true,
    icon: <OfficeIcon letter="P" color="#cb4424" />,
  },
  { name: 'Camtasia', running: true, icon: <CamtasiaIcon color="#5c9a10" /> },
  { name: 'Camtasia Recorder', running: true, icon: <CamtasiaIcon color="#f0604a" /> },
];

const tray = [
  {
    name: 'Скрытые значки',
    icon: <svg width="12" height="7" viewBox="0 0 12 7" fill="none" stroke="#ddd"><path d="M1 6l5-5 5 5" /></svg>,
  },
  {
    name: 'Служба',
    icon: (
      <svg width="13" height="13" viewBox="0 0 13 13" fill="none">
        <circle cx="6.500" cy="6.500" r="5.200" stroke="#a8753c" strokeWidth="2" strokeDasharray="2 1.200" />
        <circle cx="6.500" cy="6.500" r="3.800" fill="#54585f" stroke="#7b7468" />
        <path d="M4.500 5l2 3 2-3" stroke="#a98d5d" />
      </svg>
    ),
  },
  {
    name: 'Облако',
    icon: (
      <svg width="14" height="11" viewBox="0 0 14 11">
        <path d="M3.500 10.500a3 3 0 0 1-.3-6 4 4 0 0 1 7.600-.3 3.200 3.200 0 0 1-.3 6.300z" fill="#fff" />
        <path d="M7 3.500l2.500 3H8V9H6V6.500H4.500z" fill="#111" />
      </svg>
    ),
  },
  {
    name: 'AnyDesk',
    icon: (
      <svg width="14" height="14" viewBox="0 0 14 14">
        <path d="M0 0h14v14H0z" fill="#ef443b" />
        <path d="M5.500 4L8.500 7l-3 3-3-3z" fill="#fff" />
        <path d="M8 4.500L10.500 7 8 9.500" fill="none" stroke="#fff" strokeWidth="1.300" />
      </svg>
    ),
  },
  {
    name: 'Перо',
    icon: (
      <svg width="13" height="11" viewBox="0 0 13 11" fill="none" stroke="#eee" strokeWidth="1.400">
        <path d="M1.500 9.500C0 6 5 1 11.500 1c1.500 2-2.500 6-8 5.500M1.500 9.500c3 1.500 6-.5 7.500-3" />
      </svg>
    ),
  },
  {
    name: 'Антивирус',
    icon: (
      <svg width="14" height="14" viewBox="0 0 14 14">
        <circle cx="7" cy="7" r="6.800" fill="#f0d02c" />
        <path d="M7 .2a6.800 6.800 0 0 0 0 13.600c-4-3-4-9 0-13.600z" fill="#3fa535" />
        <path d="M7 3.500v7M3.500 7h7" stroke="#24802b" strokeWidth="2" />
      </svg>
    ),
  },
  {
    name: 'Звук',
    icon: <svg width="13" height="10" viewBox="0 0 13 10" fill="none" stroke="#ddd"><path d="M.5 3.500h2l3-3v9l-3-3h-2zM8.500 3l4 4M12.500 3l-4 4" /></svg>,
  },
  {
    name: 'Батарея',
    icon: (
      <svg width="14" height="11" viewBox="0 0 14 11">
        <path d="M3 4h10v6H3z" fill="#fff" stroke="#ddd" /><path d="M13.500 6v2" stroke="#ddd" />
        <path d="M1 0v2M4 0v2M.2 2h4.600v2.500H3V8" fill="none" stroke="#ddd" />
      </svg>
    ),
  },
  {
    name: 'Сеть',
    icon: (
      <svg width="12" height="12" viewBox="0 0 12 12" fill="none" stroke="#bbb">
        <path d="M1 11C1 5 5 1 11 1M4 11c0-4 3-7 7-7M7 11c0-2.500 1.500-4 4-4" />
        <circle cx="10" cy="10.500" r="1" fill="#ddd" />
      </svg>
    ),
  },
];

function Taskbar() {
  return (
    <div className="flex h-[33px] shrink-0 bg-[#0c0c0a] text-white">
      <button aria-label="Пуск" className="flex w-10 items-center justify-center">
        <svg width="14" height="14" viewBox="0 0 14 14" fill="#eee">
          <path d="M0 2l6-.8v5.500H0zM6.700 1.100L14 0v6.700H6.700zM0 7.400h6V13l-6-.9zM6.700 7.400H14V14l-7.300-1z" />
        </svg>
      </button>
      <div className="grid w-[496px] grid-cols-12">
        {apps.map(app => (
          <button
            key={app.name}
            aria-label={app.name}
            className={clsx('flex flex-col items-center', app.name === 'Excel' && 'bg-[#363636]')}
          >
            <span className="flex flex-1 items-center">{app.icon}</span>
            <span className={clsx('h-[2px]', app.name === 'Excel' ? 'w-full' : 'w-[34px]', app.running && 'bg-[#76a9dc]')} />
          </button>
        ))}
      </div>
      <div className="ml-auto flex items-center">
        {tray.map(item => (
          <button key={item.name} aria-label={item.name} className="flex w-5 justify-center">{item.icon}</button>
        ))}
        <button aria-label="Клавиатура" className="ml-[2px]">
          <svg width="21" height="13" viewBox="0 0 21 13" fill="none" stroke="#e6e6e6">
            <path d="M.5.500h20v12H.5z" />
            <path d="M3 3.500h15M3 6.500h15" strokeDasharray="1.500 1" />
            <path d="M3 9.500h2M6 9.500h9M16 9.500h2" />
          </svg>
        </button>
        <button className="w-9 text-[10px]">РУС</button>
        <div className="w-[52px] text-center text-[10px] leading-[15px]">
          <div>13:18</div>
          <div>15.10.2020</div>
        </div>
        <button aria-label="Уведомления" className="ml-[11px] flex">
          <svg width="20" height="20" viewBox="0 0 20 20">
            <path d="M0 1h14v10H6l-3 3v-3H0z" fill="#fff" />
            <path d="M2.500 4h9M2.500 6h9M2.500 8h6" stroke="#333" />
            <circle cx="13" cy="13" r="6" fill="#2b2b2b" stroke="#777" />
            <text x="13" y="16.500" textAnchor="middle" fontSize="9" fill="#fff">1</text>
          </svg>
        </button>
        <button aria-label="Показать рабочий стол" className="ml-3 h-[33px] w-1 border-l border-[#666]" />
      </div>
    </div>
  );
}

export default function App() {
  const [formula, setFormula] = useState('=D7-22700');

  return (
    <div className="flex h-screen flex-col overflow-hidden font-['Noto_Sans','Open_Sans',sans-serif]">
      <TitleBar />
      <TabBar />
      <Ribbon />
      <FormulaBar formula={formula} onChange={setFormula} />
      <Sheet formula={formula} />
      <SheetTabs />
      <StatusBar />
      <Taskbar />
    </div>
  );
}
